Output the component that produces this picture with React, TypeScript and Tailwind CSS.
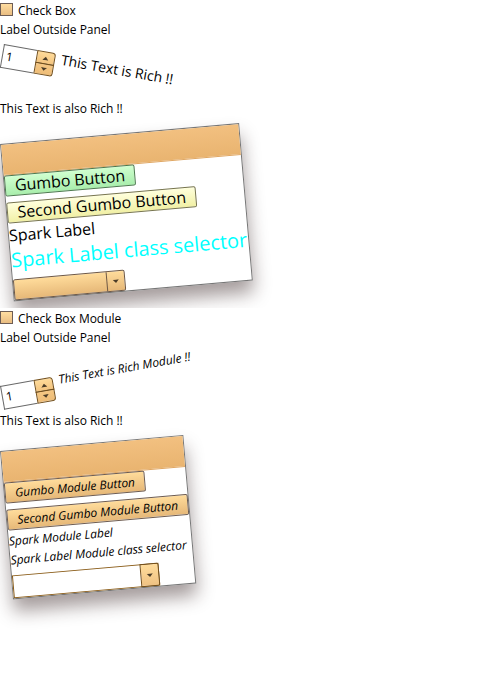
import type { ReactNode } from "react";

const peach = "bg-gradient-to-b from-[#ffdc9b] to-[#e6b878]";

function Triangle({ up = false }: { up?: boolean }) {
  return (
    <svg width="7" height="4" viewBox="0 0 7 4" className={up ? "" : "rotate-180"}>
      <path d="M3.5 0.4 6.5 3.8H0.5Z" fill="#4a3c28" />
    </svg>
  );
}

function CheckBox({ label }: { label: string }) {
  return (
    <div className="flex h-[21px] items-center gap-[5px]">
      <span className="-mt-0.5 h-[13px] w-[13px] border border-[#6d5d55] bg-gradient-to-b from-[#ffdda0] to-[#e9bd82]" />
      <span>{label}</span>
    </div>
  );
}

function Stepper({ className }: { className: string }) {
  return (
    <div className={`flex h-6 w-[53px] shrink-0 origin-top-left ${className}`}>
      <div className="flex flex-1 items-center border border-r-0 border-[#696969] bg-white pb-0.5 pl-[3px]">1</div>
      <div className="flex w-[19px] flex-col">
        <div className="flex h-[13px] items-center justify-center rounded-tr-[3px] border border-[#74501c] bg-gradient-to-b from-[#ffdb99] to-[#f3c47f]">
          <Triangle up />
        </div>
        <div className="-mt-px flex h-3 items-center justify-center rounded-br-[3px] border border-[#74501c] bg-gradient-to-b from-[#f5c783] to-[#eebd78]">
          <Triangle />
        </div>
      </div>
    </div>
  );
}

function Panel({ className, children }: { className: string; children: ReactNode }) {
  return (
    <div
      className={`flex origin-top-left -rotate-5 flex-col items-start border border-[#777] bg-white shadow-[0px_12px_18px_rgba(40,20,20,0.42)] ${className}`}
    >
      <div className="h-[31px] w-full shrink-0 border-b border-[#e0a763] bg-gradient-to-b from-[#f2c080] to-[#e9b470]" />
      {children}
    </div>
  );
}

function Button({ className, children }: { className: string; children: ReactNode }) {
  return (
    <button className={`flex h-[21px] shrink-0 items-center justify-center rounded-[2px] border ${className}`}>
      {children}
    </button>
  );
}

export default function App() {
  return (
    <div className="h-[683px] w-[500px] overflow-hidden bg-white font-['Open_Sans',sans-serif] text-[12px] leading-[17px] tracking-[-0.03px] whitespace-nowrap text-black">
      <section className="h-[308px] overflow-y-clip">
        <CheckBox label="Check Box" />
        <div>Label Outside Panel</div>
        <div className="flex h-[62px] pt-[6px] pl-1">
          <Stepper className="rotate-10" />
          <div className="mt-[6px] ml-[6px] h-5 origin-top-left rotate-10 text-[14px] leading-5">This Text is Rich !!</div>
        </div>
        <div>This Text is also Rich !!</div>
        <Panel className="mt-[27px] h-[158px] w-[240px] text-[16px]">
          <Button className="w-[131px] border-[#4c7a4e] bg-gradient-to-b from-[#d0ffd0] to-[#a9eeac]">Gumbo Button</Button>
          <Button className="mt-[6px] w-[190px] border-[#77754e] bg-gradient-to-b from-[#ffffdc] to-[#f1f0a5]">
            Second Gumbo Button
          </Button>
          <div className="mt-px leading-[22px]">Spark Label</div>
          <div className="text-[20px] leading-7 text-[#00ffff]">Spark Label class selector</div>
          <div className={`mt-[5px] flex h-[21px] w-[112px] rounded-[2px] border border-[#6e5845] ${peach}`}>
            <div className="flex-1 border-r border-[#6e5845]" />
            <div className="flex w-[17px] items-center justify-center">
              <Triangle />
            </div>
          </div>
        </Panel>
      </section>
      <section>
        <CheckBox label="Check Box Module" />
        <div>Label Outside Panel</div>
        <div className="flex h-[66px] pt-[40px]">
          <Stepper className="-rotate-10" />
          <div className="-mt-[15px] ml-[4px] h-[17px] origin-top-left -rotate-10 italic">This Text is Rich Module !!</div>
        </div>
        <div>This Text is also Rich !!</div>
        <Panel className="mt-[22px] h-[149px] w-[184px] italic">
          <Button className={`w-[141px] border-[#6e5c50] ${peach}`}>Gumbo Module Button</Button>
          <Button className={`mt-[6px] w-[182px] border-[#6e5c50] ${peach}`}>Second Gumbo Module Button</Button>
          <div className="mt-[2px] leading-[18px]">Spark Module Label</div>
          <div className="mt-[1px] leading-[18px]">Spark Label Module class selector</div>
          <div className="mt-[6px] flex h-[23px] w-[147px] border border-[#8a5c18] bg-white">
            <div className="flex-1" />
            <div className="-my-px -mr-px flex w-[19px] items-center justify-center rounded-r-[2px] border border-[#74501c] bg-gradient-to-b from-[#ffdc9b] to-[#efc283]">
              <Triangle />
            </div>
          </div>
        </Panel>
      </section>
    </div>
  );
}
